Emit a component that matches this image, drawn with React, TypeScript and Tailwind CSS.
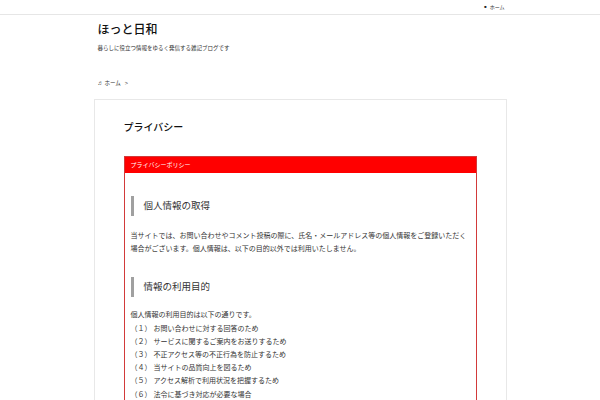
import React from "react";

const jp = { fontFamily: '"Liberation Sans", "Noto Sans CJK JP", sans-serif' };

const uses = [
  "（１） お問い合わせに対する回答のため",
  "（２） サービスに関するご案内をお送りするため",
  "（３） 不正アクセス等の不正行為を防止するため",
  "（４） 当サイトの品質向上を図るため",
  "（５） アクセス解析で利用状況を把握するため",
  "（６） 法令に基づき対応が必要な場合",
];

const Heading = ({ children }: { children: React.ReactNode }) => (
  <h2 className="flex items-center h-[20px] border-l-[3px] border-[#a0a0a0] pl-[10px] text-[9.5px] text-[#333]">
    {children}
  </h2>
);

export default function App() {
  return (
    <div className="min-h-[400px] bg-white text-[#333]" style={jp}>
      <div className="h-[15px] border-b border-[#e6e6e6]">
        <div className="w-[413px] mx-auto flex justify-end items-center h-[14px] pr-[2px]">
          <span className="text-[4px] mr-[3px] text-[#222]">■</span>
          <span className="text-[5px] leading-[8px]">ホーム</span>
        </div>
      </div>

      <div className="w-[413px] mx-auto">
        <div className="px-[4px] pt-[6px]">
          <p className="text-[12px] leading-[18px] font-medium text-[#111]">ほっと日和</p>
          <p className="mt-[5px] text-[5.5px] leading-[8px]">暮らしに役立つ情報をゆるく発信する雑記ブログです</p>
          <div className="mt-[27px] flex items-center text-[5.5px] leading-[8px]">
            <span className="text-[6px] mr-[1px]">♬</span>
            <span>ホーム</span>
            <span className="ml-[4px]">&gt;</span>
          </div>
        </div>

        <div className="mt-[12px] border border-[#e8e8e8] px-[29px] pt-[21px] pb-[30px]">
          <h1 className="text-[10px] leading-[14px] font-medium text-[#111]">プライバシー</h1>

          <div className="mt-[21px] border border-[#d23a3a]">
            <div className="h-[16px] bg-[#ff0000] px-[6px] flex items-center text-white text-[6px]">
              プライバシーポリシー
            </div>
            <div className="px-[6px] pt-[23px] pb-[20px]">
              <Heading>個人情報の取得</Heading>
              <p className="mt-[13px] text-[7px] leading-[13.2px]">
                当サイトでは、お問い合わせやコメント投稿の際に、氏名・メールアドレス等の個人情報をご登録いただく場合がございます。個人情報は、以下の目的以外では利用いたしません。
              </p>

              <div className="mt-[22px]">
                <Heading>情報の利用目的</Heading>
              </div>
              <div className="mt-[11px] text-[7px] leading-[13.2px]">
                <p>個人情報の利用目的は以下の通りです。</p>
                {uses.map((u) => (
                  <p key={u}>{u}</p>
                ))}
              </div>
            </div>
          </div>
        </div>
      </div>
    </div>
  );
}
